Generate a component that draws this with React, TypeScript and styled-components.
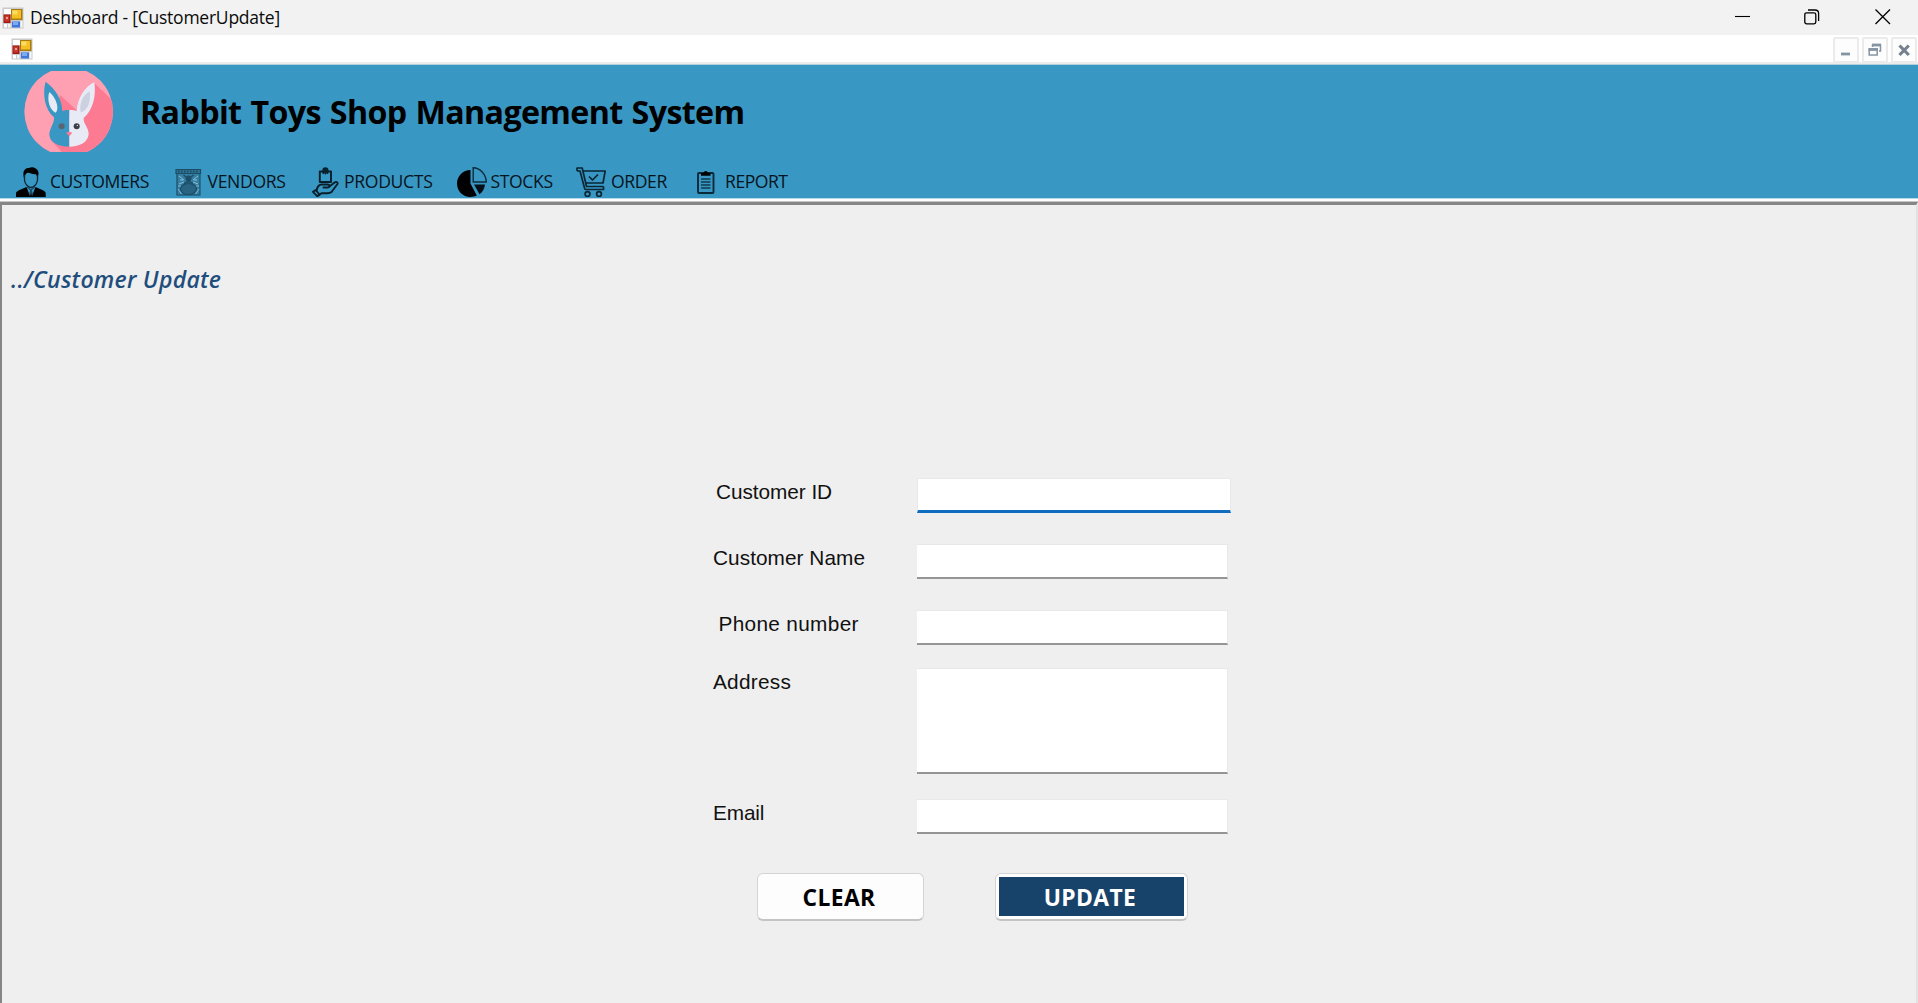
import React from "react";
import styled, { createGlobalStyle } from "styled-components";

const ui = `"Open Sans", "Noto Sans", sans-serif`;
const BLUE = "#3997c4";

const GlobalStyle = createGlobalStyle`
  * { box-sizing: border-box; }
  body { margin: 0; background: #efefef; overflow: hidden; font-family: ${ui}; }
`;

const Window = styled.div`
  display: flex;
  flex-direction: column;
  width: 100vw;
  height: 100vh;
`;

const TitleBar = styled.header`
  display: flex;
  align-items: center;
  height: 35px;
  flex: none;
  padding-left: 2px;
  background: #f2f2f2;
`;

const WindowTitle = styled.span`
  flex: 1;
  padding: 0 0 1px 6px;
  font-size: 17.5px;
  line-height: 24px;
  letter-spacing: -0.24px;
  color: #0a0a0a;
`;

const CaptionButtons = styled.div`
  display: flex;
  gap: 54px;
  padding: 0 27px 2px 0;
  svg { display: block; }
  svg:last-child { margin-left: 1px; }
`;

const MdiBar = styled.div`
  display: flex;
  justify-content: space-between;
  flex: none;
  height: 30px;
  padding: 2px 1px 0 11px;
  background: linear-gradient(#fff 27px, #ececec 27px, #ececec 29px, #b5cfdb 29px);
  > svg { margin-top: 1px; }
`;

const MdiButtons = styled.div`
  display: flex;
  gap: 3px;
`;

const MdiButton = styled.div`
  display: grid;
  place-items: center;
  width: 26px;
  height: 26px;
  border: 2px solid #ebebeb;
  border-radius: 2px;
  background: #fdfdfd;
`;

const Banner = styled.div`
  display: flex;
  flex-direction: column;
  flex: none;
  height: 133px;
  background: ${BLUE};
`;

const Brand = styled.div`
  display: flex;
  height: 95px;
  padding: 6px 0 0 24px;
`;

const BrandTitle = styled.h1`
  margin: 19px 0 0 27px;
  font-size: 32.2px;
  line-height: 44px;
  font-weight: 700;
  letter-spacing: -0.63px;
  word-spacing: 1.3px;
  color: #000;
  white-space: nowrap;
`;

const Nav = styled.nav`
  display: flex;
  padding-left: 16px;
`;

const NavItem = styled.div<{ $w: number; $icon: number }>`
  display: flex;
  align-items: flex-start;
  width: ${(p) => p.$w}px;
  height: 38px;
  > div {
    display: flex;
    align-items: center;
    width: ${(p) => p.$icon}px;
    height: 30px;
    margin-top: 7px;
    flex: none;
  }
`;

const NavText = styled.span<{ $ls: number }>`
  font-size: 17.6px;
  line-height: 24px;
  letter-spacing: ${(p) => p.$ls}px;
  color: #06141c;
  white-space: nowrap;
  padding-top: 9px;
`;

const Divider = styled.div`
  flex: none;
  height: 4px;
  background: linear-gradient(#b6d9ea 1px, #fff 1px, #fdfdfd 3px, #c6c6c6 3px);
`;

const Workspace = styled.main`
  flex: 1;
  border-top: 3px solid #868686;
  border-left: 2px solid #868686;
  border-right: 2px solid #e2e2e2;
  background: #efefef;
`;

const Breadcrumb = styled.h2`
  margin: 0;
  padding: 58px 0 0 9px;
  height: 273px;
  font-size: 23px;
  line-height: 32px;
  font-weight: 600;
  font-style: italic;
  letter-spacing: 0.27px;
  color: #1f4e7d;
`;

const Form = styled.form`
  display: flex;
  flex-direction: column;
  padding-left: 711px;
`;

const Row = styled.div<{ $h: number; $gap: number }>`
  display: flex;
  height: ${(p) => p.$h}px;
  margin-bottom: ${(p) => p.$gap}px;
`;

const Label = styled.label<{ $indent: number; $ls: number }>`
  width: 204px;
  flex: none;
  padding: 2px 0 0 ${(p) => p.$indent}px;
  font-family: "Liberation Sans", Arial, sans-serif;
  font-size: 20.8px;
  line-height: 24px;
  letter-spacing: ${(p) => p.$ls}px;
  color: #111;
`;

const Field = styled.div<{ $active?: boolean }>`
  width: ${(p) => (p.$active ? 314 : 311)}px;
  border: 1px solid #e8e8e8;
  border-left-width: ${(p) => (p.$active ? 1 : 0)}px;
  border-bottom: ${(p) => (p.$active ? "3px solid #0f6cbf" : "2px solid #959595")};
  background: #fff;
`;

const Actions = styled.div`
  display: flex;
  gap: 71px;
  padding: 0 0 0 44px;
`;

const Button = styled.button<{ $w: number; $primary?: boolean }>`
  display: flex;
  width: ${(p) => p.$w}px;
  height: 48px;
  padding: ${(p) => (p.$primary ? "3px" : "0")};
  border: 1px solid #d4d4d4;
  border-bottom: 2px solid #c4c4c4;
  border-radius: 6px;
  background: #fdfdfd;
  font-family: ${ui};
  color: ${(p) => (p.$primary ? "#fff" : "#000")};
  span {
    display: flex;
    flex: 1;
    align-self: stretch;
    align-items: center;
    justify-content: center;
    padding: 2px 3px 0 0;
    background: ${(p) => (p.$primary ? "#17436b" : "transparent")};
    font-size: 22.8px;
    font-weight: 700;
    line-height: 30px;
    letter-spacing: 0.4px;
  }
`;

const AppIcon = () => (
  <svg width="22" height="22" viewBox="0 0 22 22">
    <rect x="0.5" y="0.5" width="21" height="21" fill="#c9cacb" />
    <rect x="2" y="2" width="7" height="5" fill="#fff" />
    <rect x="2" y="17" width="3" height="3.500" fill="#fff" />
    <rect x="6" y="17" width="2.500" height="3.500" fill="#f4f4f4" />
    <rect x="18.500" y="14" width="2" height="6.500" fill="#f7f7f7" />
    <rect x="9" y="2" width="11.500" height="11" fill="#a87c12" />
    <rect x="10" y="3" width="9" height="8.500" fill="#f3bf21" />
    <rect x="10.500" y="3.500" width="5" height="4" fill="#fbdc6a" />
    <rect x="1.500" y="7.500" width="7" height="8.500" fill="#a31a14" />
    <rect x="2.500" y="8.500" width="4.500" height="6" fill="#c93a2e" />
    <rect x="4" y="10" width="2" height="2" fill="#f09a90" />
    <rect x="10" y="14.500" width="8" height="6" fill="#3f78dd" />
    <rect x="11" y="15" width="5" height="3" fill="#7eaaf3" />
  </svg>
);

const Logo = () => (
  <svg width="89" height="81" viewBox="73 33 267 243">
    <defs>
      <clipPath id="disc"><circle cx="207" cy="155" r="133" /></clipPath>
    </defs>
    <g clipPath="url(#disc)">
      <rect x="70" y="30" width="275" height="250" fill="#ff9fb2" />
      <path d="M280 66 L350 132 V280 H190 L152 238 L220 200Z" fill="#fc7b93" />
      <path d="M180 104 L233 152 L208 170 L180 150Z" fill="#fc7b93" />
    </g>
    <path d="M138 65 C128 98 134 148 163 172 C165 190 149 205 149 225 C151 247 175 260 209 260 V150 C201 149 194 151 188 154 C187 116 168 88 138 65Z" fill={BLUE} />
    <path d="M284 66 C257 80 234 112 231 153 C224 150 216 149 209 150 V260 C240 259 265 248 267 222 C267 202 250 191 252 174 C280 150 290 108 284 66Z" fill="#e8ebf5" />
    <path d="M149 96 C142 113 147 148 167 158 C178 153 175 119 149 96Z" fill="#e8ebf5" />
    <path d="M270 94 C248 106 238 133 243 157 C263 153 275 126 270 94Z" fill="#ccd1e0" />
    <circle cx="186" cy="199" r="9" fill="#5b6470" />
    <circle cx="231" cy="199" r="9" fill="#3b3f48" />
    <circle cx="233" cy="196" r="2" fill="#fff" />
    <path d="M199 218 Q209 214 218 218 L209 229Z" fill="#fc7b93" />
  </svg>
);

const CustomerIcon = () => (
  <svg width="30" height="30" viewBox="0 0 30 30">
    <path d="M8 11 C6 4 9 1 13 1 C17-1 23 2 22.500 7 L21.500 11 L20 7 C17 8 13 5 11 6 C9 7 9 9 8.500 11Z" fill="#000" />
    <path d="M8.500 8 V13 C9 17 12 20.500 15 20.500 C18 20.500 21 17 21.500 13 V8" fill="none" stroke="#0b2533" strokeWidth="1.300" />
    <path d="M0 30 V26 C1 23 6 22.500 10.500 20 L14 29 L15 23 L16 29 L19.500 20 C24 22.500 29 23 29.700 26 V30Z" fill="#000" />
    <path d="M11 20 L14.800 23 L19 20 M15 22.500 L13.500 28 M15 22.500 L16.600 28" fill="none" stroke="#1b475e" strokeWidth="1.100" />
  </svg>
);

const VendorIcon = () => (
  <svg width="27" height="29" viewBox="0 0 27 29" fill="none" stroke="#1d4d66">
    <rect x="1.500" y="1" width="23.500" height="26.500" fill="#337fa4" stroke="none" />
    <path d="M1 1.500 H25.500 V5.500 H1Z" strokeWidth="1.200" fill="#2c7396" />
    <path d="M3 3.500 H24" strokeWidth="1.800" strokeDasharray="1.500 1.500" />
    <path d="M2 6 V27 H25 V6" strokeWidth="1.100" />
    <path d="M4 8 L9 12 M23 8 L18 12 M4 16 L9 14 M23 16 L18 14 M5 12 H8 M19 12 H22" stroke="#8dbdd4" strokeWidth="1" />
    <circle cx="13.500" cy="10.500" r="2.600" fill="#1d4c64" />
    <path d="M8.500 7 L11 9 M18.500 7 L16 9 M9 15.500 L13.500 13.500 L18 15.500" strokeWidth="1.600" />
    <ellipse cx="13.500" cy="21" rx="8" ry="5.500" fill="#286482" strokeWidth="1.200" />
    <path d="M3 21 L6.500 26 M24 21 L20.500 26 M3 18 H6 M21 18 H24" stroke="#7fb3cc" />
  </svg>
);

const ProductIcon = () => (
  <svg width="27" height="30" viewBox="0 0 27 30" fill="none" stroke="#08202c" strokeWidth="1.900" strokeLinejoin="round" strokeLinecap="round">
    <path d="M7.800 4.500 H19 V15 H7.800Z" />
    <path d="M11.300 6 V3 C11.300 0.500 15.500 0.500 15.500 3 V6 M13.400 2 V6.500" />
    <path d="M4.500 24 C5 20.500 7 17.500 10 17.500 H15.500 C18.500 17.500 18 20.500 15.500 20.500 H11.500 M16.500 20.300 L22.500 15.500 C24.500 14.200 26.500 15.500 25.300 17.300 L19.500 25 C18.500 26 17 26.200 15 26.200 H9.500 L6.500 28.500" />
    <path d="M1 24.800 L3.700 23 L7.500 27.500 L5.200 29.200Z" />
  </svg>
);

const StockIcon = () => (
  <svg width="31" height="30" viewBox="0 0 31 30">
    <path d="M13.500 3 V16.500 L19.800 28.500 C10 33 0 26.500 0 16.500 C0 9 6 3 13.500 3Z" fill="#000" />
    <path d="M16.200 0.800 C23 1 29 7 29.300 15 H16.200Z" fill="none" stroke="#0c2c3c" strokeWidth="1.400" />
    <path d="M17 17.500 H28 C27.500 22 25.500 25 22.500 27.200Z" fill="#041017" />
  </svg>
);

const OrderIcon = () => (
  <svg width="30" height="30" viewBox="0 0 30 30" fill="none" stroke="#0a2634" strokeWidth="1.700" strokeLinejoin="round">
    <path d="M1 4 V1 H6.200 L10.500 19.500 H27.500 M1 4 H4 L8.500 21 C8.500 22 9 22.500 10 22.500 H27.500 V19.500" />
    <path d="M7 4 H29.200 L27 16 H10" />
    <path d="M13 9.500 L16.500 13 L22 7.500" />
    <circle cx="11.500" cy="27" r="2.400" />
    <circle cx="23" cy="27" r="2.400" />
  </svg>
);

const ReportIcon = () => (
  <svg width="18" height="24" viewBox="0 0 18 24">
    <rect x="1" y="3" width="15.500" height="20" rx="1" fill="none" stroke="#0b2a39" strokeWidth="1.900" />
    <path d="M4 5.800 V3 H6.500 C7 0.300 10.500 0.300 11 3 H13.500 V5.800Z" fill="#000" />
    <path d="M4 9 H13.500 M4 12 H13.500 M4 15 H13.500 M4 18 H13.500" stroke="#123a4e" strokeWidth="1.500" />
  </svg>
);

const nav = [
  { text: "CUSTOMERS", icon: <CustomerIcon />, iconWidth: 34, width: 159, ls: -0.47 },
  { text: "VENDORS", icon: <VendorIcon />, iconWidth: 32.5, width: 136.5, ls: -0.33 },
  { text: "PRODUCTS", icon: <ProductIcon />, iconWidth: 32.5, width: 145, ls: -0.33 },
  { text: "STOCKS", icon: <StockIcon />, iconWidth: 34, width: 119.5, ls: -0.4 },
  { text: "ORDER", icon: <OrderIcon />, iconWidth: 35, width: 120.5, ls: -0.4 },
  { text: "REPORT", icon: <ReportIcon />, iconWidth: 28.5, width: 100, ls: -0.48 },
];

const fields = [
  { label: "Customer ID", indent: 3, height: 35, gap: 31, ls: -0.06, active: true },
  { label: "Customer Name", indent: 0, height: 35, gap: 31, ls: 0.05 },
  { label: "Phone number", indent: 5.5, height: 35, gap: 23, ls: 0.32 },
  { label: "Address", indent: 0, height: 106, gap: 25, ls: 0.25 },
  { label: "Email", indent: 0, height: 35, gap: 39, ls: -0.15 },
];

export default function App() {
  return (
    <Window>
      <GlobalStyle />
      <TitleBar>
        <AppIcon />
        <WindowTitle>Deshboard - [CustomerUpdate]</WindowTitle>
        <CaptionButtons>
          <svg width="15" height="15"><path d="M0 7.500 H15" stroke="#000" strokeWidth="1.100" /></svg>
          <svg width="16" height="16" fill="none" stroke="#000" strokeWidth="1.300">
            <rect x="0.800" y="3.800" width="11" height="11" rx="1.800" />
            <path d="M4 1 H11 Q14.600 1 14.600 4.500 V12" />
          </svg>
          <svg width="16" height="16"><path d="M0.500 0.500 L15 15 M15 0.500 L0.500 15" stroke="#000" strokeWidth="1.300" /></svg>
        </CaptionButtons>
      </TitleBar>
      <MdiBar>
        <AppIcon />
        <MdiButtons>
          <MdiButton>
            <svg width="14" height="14"><path d="M2 11 H11" stroke="#8494a3" strokeWidth="2.800" /></svg>
          </MdiButton>
          <MdiButton>
            <svg width="14" height="14" fill="none" stroke="#8494a3">
              <path d="M4.500 4 V2 H12.500 V8 H11" strokeWidth="1.500" />
              <path d="M4 2 H13" strokeWidth="2.800" />
              <rect x="1.200" y="6" width="8" height="6" strokeWidth="1.500" />
              <path d="M0.600 6.500 H10" strokeWidth="2.800" />
            </svg>
          </MdiButton>
          <MdiButton>
            <svg width="14" height="14"><path d="M2.500 2.500 L11.800 12 M11.800 2.500 L2.500 12" stroke="#74828f" strokeWidth="3.200" /></svg>
          </MdiButton>
        </MdiButtons>
      </MdiBar>
      <Banner>
        <Brand>
          <Logo />
          <BrandTitle>Rabbit Toys Shop Management System</BrandTitle>
        </Brand>
        <Nav>
          {nav.map((n) => (
            <NavItem key={n.text} $w={n.width} $icon={n.iconWidth}>
              <div>{n.icon}</div>
              <NavText $ls={n.ls}>{n.text}</NavText>
            </NavItem>
          ))}
        </Nav>
      </Banner>
      <Divider />
      <Workspace>
        <Breadcrumb>../Customer Update</Breadcrumb>
        <Form>
          {fields.map((f) => (
            <Row key={f.label} $h={f.height} $gap={f.gap}>
              <Label $indent={f.indent} $ls={f.ls}>{f.label}</Label>
              <Field $active={f.active} />
            </Row>
          ))}
          <Actions>
            <Button type="button" $w={167}><span>CLEAR</span></Button>
            <Button type="button" $w={193} $primary><span>UPDATE</span></Button>
          </Actions>
        </Form>
      </Workspace>
    </Window>
  );
}
